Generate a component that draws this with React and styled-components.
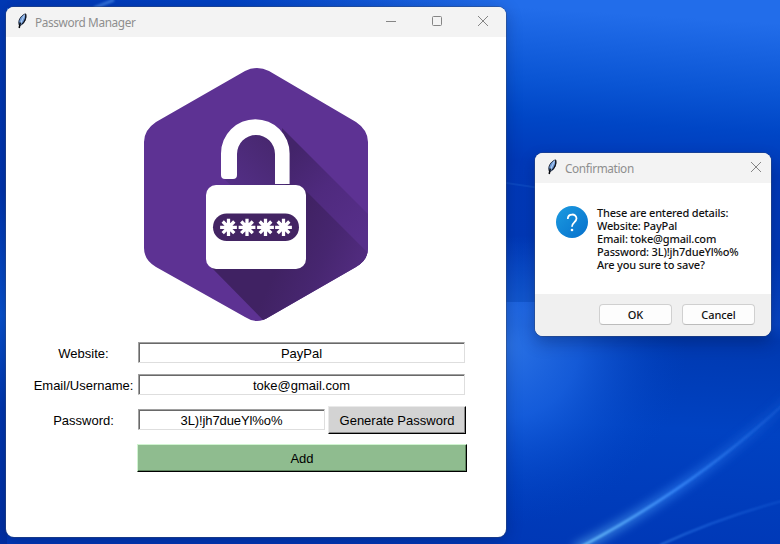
import React from "react";
import styled, { createGlobalStyle } from "styled-components";

const GlobalStyle = createGlobalStyle`
  *, *::before, *::after { box-sizing: border-box; }
  body { margin: 0; overflow: hidden; }
`;

const Desktop = styled.main`
  position: relative;
  width: 780px;
  height: 544px;
  overflow: hidden;
  background: #0038b4;
  font-family: "Liberation Sans", sans-serif;
`;

const Wallpaper = styled.svg`
  position: absolute;
  inset: 0;
  width: 780px;
  height: 544px;
`;

const Window = styled.section`
  position: absolute;
  left: ${(p) => p.$x}px;
  top: ${(p) => p.$y}px;
  width: ${(p) => p.$w}px;
  height: ${(p) => p.$h}px;
  display: flex;
  flex-direction: column;
  overflow: hidden;
  border-radius: 8px;
  background: #fff;
  box-shadow: 0 0 0 1px rgba(50, 70, 110, 0.45), 0 ${(p) => p.$drop}px 16px rgba(0, 15, 60, 0.3);
`;

const TitleBar = styled.header`
  flex: none;
  display: flex;
  align-items: center;
  height: 30px;
  padding: 0 ${(p) => p.$end}px 0 ${(p) => p.$start}px;
  background: #f3f3f3;
`;

const Title = styled.h1`
  flex: 1;
  margin: 0 0 1px 7px;
  font: 400 11.8px/16px "Noto Sans", sans-serif;
  letter-spacing: -0.37px;
  color: #8e8e8e;
`;

const WindowControls = styled.nav`
  display: flex;
  gap: 34px;
  margin-bottom: 2px;
`;

const ControlIcon = styled.svg`
  display: block;
  width: 12px;
  height: 12px;
  fill: none;
  stroke: #858585;
  stroke-width: 1;
`;

const FeatherIcon = styled.svg`
  display: block;
  width: 12px;
  height: 16px;
  margin-bottom: 2px;
`;

const ManagerBody = styled.div`
  flex: 1;
  display: flex;
  flex-direction: column;
  padding: 31px 39px 0 27px;
`;

const Logo = styled.svg`
  display: block;
  width: 226px;
  height: 254px;
  margin-left: 110px;
`;

const Form = styled.form`
  display: grid;
  grid-template-columns: 101px 330px;
  grid-template-rows: 21px 21px 28px 28px;
  column-gap: 3px;
  row-gap: 11px;
  margin: 20px 0 0;
`;

const Label = styled.label`
  justify-self: center;
  align-self: center;
  padding-top: ${(p) => p.$drop || 0}px;
  font-size: 13px;
  line-height: 21px;
  color: #000;
  white-space: nowrap;
`;

const FieldRow = styled.div`
  display: flex;
  align-items: ${(p) => (p.$raised ? "flex-start" : "center")};
  gap: 3px;
  margin-left: 1px;
`;

const Entry = styled.input`
  width: ${(p) => p.$w}px;
  height: 21px;
  margin: ${(p) => p.$drop || 0}px 0 0;
  padding: 2px 0 0;
  border: 1px solid;
  border-color: #a0a0a0 #dedede #dedede #a0a0a0;
  border-radius: 0;
  outline: none;
  background: #fff;
  box-shadow: inset 1px 1px 0 #696969;
  color: #000;
  font: 13px "Liberation Sans", sans-serif;
  letter-spacing: ${(p) => p.$track || 0}px;
  text-align: center;
`;

const RaisedButton = styled.button`
  display: block;
  width: ${(p) => p.$w}px;
  height: 28px;
  padding: 0;
  border: 1px solid;
  border-color: ${(p) => p.$light} #000 #000 ${(p) => p.$light};
  border-radius: 0;
  background: ${(p) => p.$face};
  box-shadow: inset -1px -1px 0 ${(p) => p.$shade};
  color: #000;
  font: 13px "Liberation Sans", sans-serif;
`;

const AddRow = styled.div`
  grid-column: 2;
  margin-top: -1px;
`;

const Message = styled.div`
  flex: none;
  display: flex;
  gap: 9px;
  height: 111px;
  padding: 23px 20px 0 21px;
`;

const QuestionIcon = styled.svg`
  flex: none;
  width: 32px;
  height: 32px;
`;

const MessageText = styled.p`
  width: max-content;
  margin: 0;
  font: 500 11px/13px "Noto Sans", sans-serif;
  letter-spacing: -0.18px;
  white-space: pre;
  color: #111;
`;

const DialogFooter = styled.footer`
  flex: 1;
  display: flex;
  justify-content: flex-end;
  gap: 10px;
  padding: 10px 16px 0;
  background: #f0f0f0;
`;

const DialogButton = styled.button`
  width: 73px;
  height: 21px;
  padding: 0;
  border: 1px solid #d0d0d0;
  border-bottom-color: #bcbcbc;
  border-radius: 4px;
  background: #fdfdfd;
  color: #111;
  font: 500 11px/18px "Noto Sans", sans-serif;
  letter-spacing: -0.1px;
`;

function Feather() {
  return (
    <FeatherIcon viewBox="0 0 12 16" aria-hidden="true">
      <path d="M3.2 12 C1.6 8 4.5 2.5 9.5 .8 C10.8 4 9.3 8.5 6.5 11 L4.5 12.4Z" fill="#6e9ad6" stroke="#1c2436" strokeWidth=".9" />
      <path d="M8.6 1.6 L4 11.5" fill="none" stroke="#b9d3f4" strokeWidth="1" />
      <path d="M9.6 1.2 C10.2 5 8.8 8.6 6 11" fill="none" stroke="#10141f" strokeWidth="1.2" />
      <path d="M4.3 9.5 L3.2 15" fill="none" stroke="#05070c" strokeWidth="1.5" />
    </FeatherIcon>
  );
}

function CloseIcon() {
  return (
    <ControlIcon viewBox="0 0 12 12" aria-label="Close">
      <path d="M1 1 L11 11 M11 1 L1 11" />
    </ControlIcon>
  );
}

function Asterisk({ x }) {
  return (
    <g transform={`translate(${x} 159.3)`} stroke="#fff" strokeWidth="3.3">
      <path d="M0 -8.6 V8.6 M-8.4 0 H8.4 M-5.8 -5.8 L5.8 5.8 M5.8 -5.8 L-5.8 5.8" />
    </g>
  );
}

function PadlockLogo() {
  const hexagon =
    "M101 3 Q113 -3 125 3 L212 54 Q224 62 224 74 V180 Q224 192 212 199 L125 249 Q113 257 101 249 L12 199 Q0 192 0 180 V74 Q0 62 12 54 Z";
  return (
    <Logo viewBox="0 0 226 254" role="img" aria-label="Open padlock">
      <defs>
        <clipPath id="hex"><path d={hexagon} /></clipPath>
        <linearGradient id="shackleShadow" gradientUnits="userSpaceOnUse" x1="140" y1="90" x2="218" y2="168">
          <stop stopColor="#43246a" />
          <stop offset=".45" stopColor="#4f2a7e" />
          <stop offset="1" stopColor="#572f8a" />
        </linearGradient>
        <linearGradient id="bodyShadow" gradientUnits="userSpaceOnUse" x1="150" y1="160" x2="222" y2="192">
          <stop stopColor="#402263" />
          <stop offset=".5" stopColor="#472670" />
          <stop offset="1" stopColor="#522c80" />
        </linearGradient>
        <linearGradient id="innerShadow" x1="1" y1="0" x2="0" y2="1">
          <stop stopColor="#442568" />
          <stop offset="1" stopColor="#55308a" />
        </linearGradient>
      </defs>
      <g transform="translate(1 0)">
        <path d={hexagon} fill="#5d3293" />
        <g clipPath="url(#hex)">
          <path d="M138 60 L226 148 V210 L140 120Z" fill="url(#shackleShadow)" />
          <path d="M159 120 L226 187 V254 H121 L66 198 L140 115Z" fill="url(#bodyShadow)" />
          <path d="M79 110 L94 60 L130 60 L143 124 L94 124Z" fill="url(#innerShadow)" />
        </g>
        <path
          d="M77 107 V85.5 A34.3 34.3 0 0 1 145.6 85.5 V116 H131 V86 A19 19 0 0 0 93 86 V107 Q93 111 89 111 H81 Q77 111 77 107Z"
          fill="#fff"
        />
        <rect x="62" y="117" width="100" height="84" rx="10" fill="#fff" />
        <rect x="69" y="145.5" width="86" height="27.5" rx="13.7" fill="#432463" />
        {[84.5, 103, 121.5, 139.5].map((x) => <Asterisk key={x} x={x} />)}
      </g>
    </Logo>
  );
}

function Background() {
  return (
    <Wallpaper viewBox="0 0 780 544" aria-hidden="true">
      <defs>
        <linearGradient id="sky" x1=".52" y1="0" x2=".43" y2="1">
          <stop stopColor="#226dea" />
          <stop offset=".13" stopColor="#0a55d4" />
          <stop offset=".2" stopColor="#0046c6" />
          <stop offset=".28" stopColor="#0039b8" />
          <stop offset=".42" stopColor="#0038b6" />
          <stop offset=".55" stopColor="#0744c2" />
          <stop offset=".58" stopColor="#0039b0" />
          <stop offset=".75" stopColor="#0042c2" />
          <stop offset="1" stopColor="#0037b5" />
        </linearGradient>
        <linearGradient id="gap" x1="0" y1="0" x2="0" y2="1">
          <stop stopColor="#0c50cc" stopOpacity="0" />
          <stop offset="1" stopColor="#1256cc" />
        </linearGradient>
        <radialGradient id="glow" gradientUnits="userSpaceOnUse" cx="507" cy="345" r="180">
          <stop stopColor="#3580f2" stopOpacity=".8" />
          <stop offset=".4" stopColor="#1f6ae8" stopOpacity=".65" />
          <stop offset="1" stopColor="#0045c6" stopOpacity="0" />
        </radialGradient>
        <linearGradient id="left" x1="0" y1="0" x2="0" y2="1">
          <stop stopColor="#0039b5" />
          <stop offset=".35" stopColor="#0034ad" />
          <stop offset=".58" stopColor="#0751ce" />
          <stop offset=".75" stopColor="#0036af" />
          <stop offset="1" stopColor="#002fa3" />
        </linearGradient>
        <linearGradient id="topFade" gradientUnits="userSpaceOnUse" x1="0" y1="0" x2="500" y2="0">
          <stop stopColor="#0037b4" />
          <stop offset=".45" stopColor="#0041c2" />
          <stop offset="1" stopColor="#0041c2" stopOpacity="0" />
        </linearGradient>
        <linearGradient id="beam" gradientUnits="userSpaceOnUse" x1="583" y1="544" x2="780" y2="411">
          <stop stopColor="#72c8ff" />
          <stop offset=".45" stopColor="#3e90ff" />
          <stop offset="1" stopColor="#2068e0" stopOpacity=".5" />
        </linearGradient>
        <filter id="soft" x="-30%" y="-30%" width="160%" height="160%"><feGaussianBlur stdDeviation="5" /></filter>
        <filter id="fine" x="-10%" y="-10%" width="120%" height="120%"><feGaussianBlur stdDeviation=".8" /></filter>
        <clipPath id="lower"><rect y="302" width="780" height="242" /></clipPath>
      </defs>
      <rect width="780" height="544" fill="url(#sky)" />
      <rect width="500" height="8" fill="url(#topFade)" />
      <rect width="7" height="544" fill="url(#left)" />
      <rect x="506" y="235" width="30" height="67" fill="url(#gap)" />
      <circle cx="507" cy="345" r="180" fill="url(#glow)" clipPath="url(#lower)" />
      <path d="M94 8 L114 0" stroke="#5597f2" strokeWidth="3" opacity=".6" filter="url(#fine)" />
      <path d="M506 183 L540 188" stroke="#195bcc" strokeWidth="2" opacity=".4" />
      <g fill="none" stroke="url(#beam)">
        <path d="M575 550 Q700 484 790 398" strokeWidth="10" opacity=".5" filter="url(#soft)" />
        <path d="M575 550 Q700 484 790 398" strokeWidth="2.5" opacity=".85" filter="url(#fine)" />
        <path d="M660 545 Q723 516 790 499" strokeWidth="1.5" opacity=".55" filter="url(#fine)" />
      </g>
    </Wallpaper>
  );
}

const details = [
  "These are entered details:",
  "Website: PayPal",
  "Email: toke@gmail.com",
  "Password: 3L)!jh7dueYl%o%",
  "Are you sure to save?",
].join("\n");

export default function App() {
  return (
    <>
      <GlobalStyle />
      <Desktop>
        <Background />
        <Window $x={6} $y={7} $w={500} $h={530} $drop={3} aria-label="Password Manager">
          <TitleBar $start={10} $end={17}>
            <Feather />
            <Title>Password Manager</Title>
            <WindowControls>
              <ControlIcon viewBox="0 0 12 12"><path d="M1 6.5 H11" /></ControlIcon>
              <ControlIcon viewBox="0 0 12 12"><rect x="1.5" y="1.5" width="9" height="9" rx="1" /></ControlIcon>
              <CloseIcon />
            </WindowControls>
          </TitleBar>
          <ManagerBody>
            <PadlockLogo />
            <Form onSubmit={(e) => e.preventDefault()}>
              <Label htmlFor="website" $drop={2}>Website:</Label>
              <FieldRow><Entry id="website" $w={327} defaultValue="PayPal" /></FieldRow>
              <Label htmlFor="email" $drop={2}>Email/Username:</Label>
              <FieldRow><Entry id="email" $w={327} defaultValue="toke@gmail.com" /></FieldRow>
              <Label htmlFor="password">Password:</Label>
              <FieldRow $raised>
                <Entry id="password" $w={187} $drop={3} $track={-0.1} defaultValue="3L)!jh7dueYl%o%" />
                <RaisedButton type="button" $w={138} $face="#d3d3d3" $light="#e9e9e9" $shade="#898989">Generate Password</RaisedButton>
              </FieldRow>
              <AddRow><RaisedButton $w={330} $face="#8fbc8f" $light="#d0f4d0" $shade="#5e845e">Add</RaisedButton></AddRow>
            </Form>
          </ManagerBody>
        </Window>
        <Window $x={535} $y={153} $w={236} $h={183} $drop={7} role="dialog" aria-label="Confirmation">
          <TitleBar $start={11} $end={9}>
            <Feather />
            <Title>Confirmation</Title>
            <WindowControls><CloseIcon /></WindowControls>
          </TitleBar>
          <Message>
            <QuestionIcon viewBox="0 0 32 32" aria-hidden="true">
              <defs><linearGradient id="questionBlue" x1="0" y1="0" x2="1" y2="1"><stop stopColor="#1c9be0" /><stop offset="1" stopColor="#0670cc" /></linearGradient></defs>
              <circle cx="16" cy="16" r="16" fill="url(#questionBlue)" />
              <path d="M11.8 13 C11.8 7 20.5 7.2 20.5 12.6 C20.5 16 16 16.3 16 20.7" fill="none" stroke="#fff" strokeWidth="1.8" />
              <circle cx="16" cy="24" r="1.3" fill="#fff" />
            </QuestionIcon>
            <MessageText>{details}</MessageText>
          </Message>
          <DialogFooter>
            <DialogButton>OK</DialogButton>
            <DialogButton>Cancel</DialogButton>
          </DialogFooter>
        </Window>
      </Desktop>
    </>
  );
}
